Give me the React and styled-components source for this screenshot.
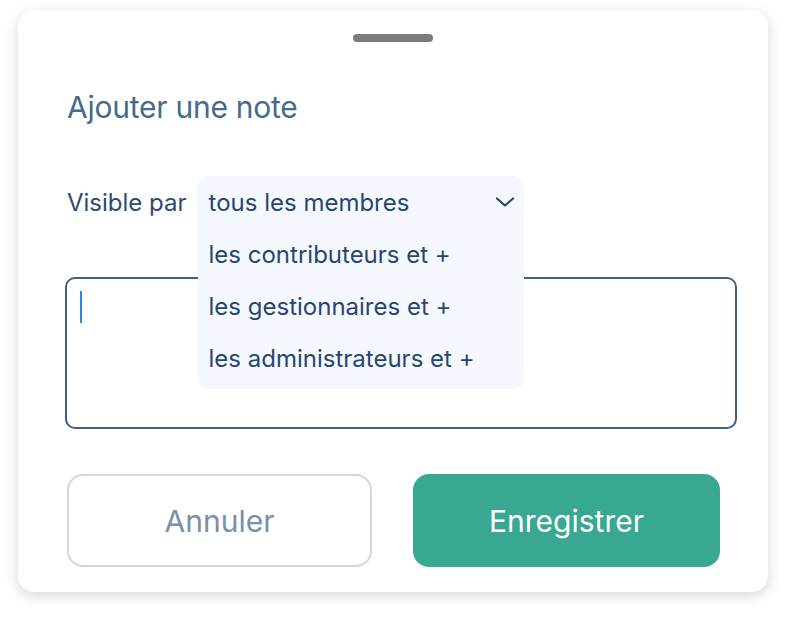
import React from "react";
import styled, { createGlobalStyle } from "styled-components";

const GlobalStyle = createGlobalStyle`
    html, body {
        margin: 0;
        padding: 0;
        background: #ffffff;
    }
    body {
        font-family: Inter, "Noto Sans", sans-serif;
    }
`;

const Page = styled.div`
    width: 786px;
    height: 618px;
    padding: 10px 0 0 18px;
    box-sizing: border-box;
`;

const Card = styled.div`
    width: 750px;
    height: 582px;
    box-sizing: border-box;
    background: #ffffff;
    border-radius: 16px;
    box-shadow: 0 4px 14px rgba(0, 0, 0, 0.16);
    padding: 24px 48px 0 49px;
    display: flex;
    flex-direction: column;
`;

const Handle = styled.div`
    align-self: center;
    width: 80px;
    height: 8px;
    border-radius: 4px;
    background: #7d7b80;
    margin-left: -1px;
`;

const Title = styled.h2`
    margin: 47px 0 0;
    font-size: 30px;
    line-height: 36px;
    font-weight: 400;
    color: #46698f;
    letter-spacing: -0.25px;
`;

const VisibilityRow = styled.div`
    margin-top: 51px;
    height: 52px;
    display: flex;
    align-items: center;
    gap: 11px;
`;

const Label = styled.span`
    font-size: 24px;
    color: #2d4b6d;
`;

const Select = styled.div`
    position: relative;
    width: 326px;
    height: 52px;
    align-self: flex-start;
    z-index: 2;
`;

const Menu = styled.div`
    position: absolute;
    top: 0;
    left: 0;
    width: 100%;
    padding-bottom: 5px;
    background: #f5f8fe;
    border-radius: 10px;
`;

const Option = styled.div`
    height: 52px;
    display: flex;
    align-items: center;
    justify-content: space-between;
    padding: 0 9px 0 11px;
    font-size: 24px;
    color: #284770;
`;

const Chevron = styled.svg`
    width: 20px;
    height: 20px;
`;

const NoteBox = styled.div`
    margin: 49px 0 0 -2px;
    width: 672px;
    height: 152px;
    box-sizing: border-box;
    border: 2px solid #3f6183;
    border-radius: 10px;
    padding: 12px 13px;
`;

const Caret = styled.div`
    width: 2px;
    height: 32px;
    background: #2f86e6;
`;

const Actions = styled.div`
    margin-top: 45px;
    display: flex;
    gap: 41px;
`;

const Button = styled.button`
    width: ${(p) => (p.primary ? "307px" : "305px")};
    height: 93px;
    box-sizing: border-box;
    border-radius: 16px;
    font-family: Inter, "Noto Sans", sans-serif;
    font-size: 30px;
    font-weight: 400;
    border: ${(p) => (p.primary ? "none" : "2px solid #d3d6e2")};
    background: ${(p) => (p.primary ? "#38a892" : "#ffffff")};
    color: ${(p) => (p.primary ? "#ffffff" : "#7a8fa8")};
`;

const options = [
    "les contributeurs et +",
    "les gestionnaires et +",
    "les administrateurs et +",
];

export default function App() {
    return (
        <>
            <GlobalStyle />
            <Page>
                <Card>
                    <Handle />
                    <Title>Ajouter une note</Title>
                    <VisibilityRow>
                        <Label>Visible par</Label>
                        <Select>
                            <Menu>
                                <Option>
                                    tous les membres
                                    <Chevron viewBox="0 0 20 20" fill="none">
                                        <path
                                            d="M2 6.5l8 7 8-7"
                                            stroke="#284770"
                                            strokeWidth="2.2"
                                            strokeLinecap="round"
                                            strokeLinejoin="round"
                                        />
                                    </Chevron>
                                </Option>
                                {options.map((o) => (
                                    <Option key={o}>{o}</Option>
                                ))}
                            </Menu>
                        </Select>
                    </VisibilityRow>
                    <NoteBox>
                        <Caret />
                    </NoteBox>
                    <Actions>
                        <Button>Annuler</Button>
                        <Button primary>Enregistrer</Button>
                    </Actions>
                </Card>
            </Page>
        </>
    );
}
